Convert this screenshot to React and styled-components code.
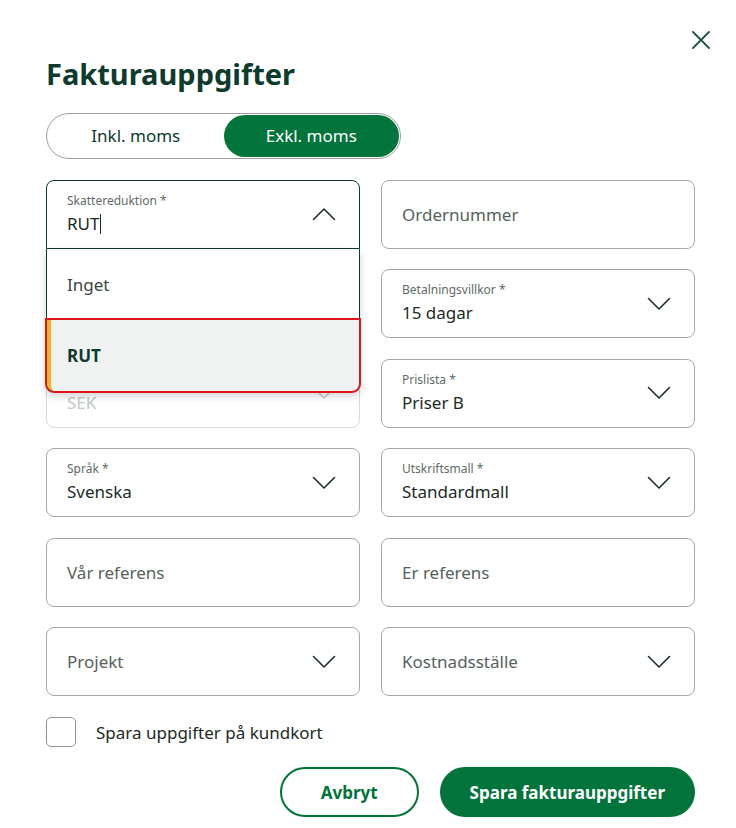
import { useState } from 'react';
import styled, { createGlobalStyle } from 'styled-components';

const GlobalStyle = createGlobalStyle`
  html, body {
    margin: 0;
    padding: 0;
    background: #ffffff;
    font-family: 'Noto Sans', 'Open Sans', sans-serif;
    color: #0f2e24;
  }
`;

const GREEN = '#00743a';
const DARK = '#0d3b2e';

function Chevron({ up, muted }) {
  return (
    <svg width="24" height="14" viewBox="0 0 24 14" fill="none">
      <path
        d={up ? 'M1.5 12.5 L12 2 L22.5 12.5' : 'M1.5 1.5 L12 12 L22.5 1.5'}
        stroke={muted ? '#c9cfcc' : '#1d2f28'}
        strokeWidth="1.6"
        strokeLinecap="round"
        strokeLinejoin="round"
      />
    </svg>
  );
}

function Field({ label, value, placeholder, select, disabled }) {
  return (
    <Box disabled={disabled}>
      <FieldText>
        {label && <Label>{label}</Label>}
        {value ? <Value disabled={disabled}>{value}</Value> : <Placeholder>{placeholder}</Placeholder>}
      </FieldText>
      {select && <Chevron muted={disabled} />}
    </Box>
  );
}

function App() {
  const [vat, setVat] = useState('exkl');
  const [save, setSave] = useState(false);

  return (
    <Page>
      <GlobalStyle />
      <Close aria-label="Stäng">
        <svg width="20" height="20" viewBox="0 0 20 20">
          <path d="M2 2 L18 18 M18 2 L2 18" stroke="#2a5a48" strokeWidth="2" strokeLinecap="round" />
        </svg>
      </Close>
      <Title>Fakturauppgifter</Title>

      <Toggle>
        <ToggleOption active={vat === 'inkl'} onClick={() => setVat('inkl')}>Inkl. moms</ToggleOption>
        <ToggleOption active={vat === 'exkl'} onClick={() => setVat('exkl')}>Exkl. moms</ToggleOption>
      </Toggle>

      <Grid>
        <ComboWrap>
          <Box open>
            <FieldText>
              <Label>Skattereduktion *</Label>
              <Value>RUT<Caret /></Value>
            </FieldText>
            <Chevron up />
          </Box>
          <Menu>
            <MenuItem>Inget</MenuItem>
            <MenuItem selected>RUT</MenuItem>
          </Menu>
        </ComboWrap>
        <Field placeholder="Ordernummer" />

        {/* covered by the open menu */}
        <Box />
        <Field label="Betalningsvillkor *" value="15 dagar" select />

        <Field label="Valuta" value="SEK" select disabled />
        <Field label="Prislista *" value="Priser B" select />

        <Field label="Språk *" value="Svenska" select />
        <Field label="Utskriftsmall *" value="Standardmall" select />

        <Field placeholder="Vår referens" />
        <Field placeholder="Er referens" />

        <Field placeholder="Projekt" select />
        <Field placeholder="Kostnadsställe" select />
      </Grid>

      <CheckRow onClick={() => setSave(!save)}>
        <CheckBox checked={save} />
        <span>Spara uppgifter på kundkort</span>
      </CheckRow>

      <Actions>
        <Button variant="outline">Avbryt</Button>
        <Button>Spara fakturauppgifter</Button>
      </Actions>
    </Page>
  );
}

const Page = styled.div`
  position: relative;
  width: 649px;
  padding: 57px 41px 10px 46px;
`;

const Close = styled.button`
  position: absolute;
  top: 30px;
  right: 25px;
  border: none;
  background: none;
  padding: 0;
  cursor: pointer;
`;

const Title = styled.h1`
  margin: 0 0 21px;
  font-size: 29px;
  font-weight: 700;
  color: ${DARK};
  line-height: 1.2;
`;

const Toggle = styled.div`
  display: grid;
  grid-template-columns: 1fr 1fr;
  width: 355px;
  height: 46px;
  box-sizing: border-box;
  border: 1px solid #9a9f9c;
  border-radius: 23px;
  padding: 1px;
  margin-bottom: 21px;
`;

const ToggleOption = styled.button`
  border: none;
  border-radius: 22px;
  background: ${(p) => (p.active ? GREEN : 'transparent')};
  color: ${(p) => (p.active ? '#ffffff' : DARK)};
  font-family: inherit;
  font-size: 17px;
  cursor: pointer;
`;

const Grid = styled.div`
  display: grid;
  grid-template-columns: 314px 314px;
  column-gap: 21px;
  row-gap: 20.5px;
`;

const Box = styled.div`
  height: 69px;
  box-sizing: border-box;
  display: flex;
  align-items: center;
  justify-content: space-between;
  padding: 0 23px 0 20px;
  border: 1px solid ${(p) => (p.open ? DARK : p.disabled ? '#d6dbd8' : '#a4aaa7')};
  border-radius: ${(p) => (p.open ? '8px 8px 0 0' : '8px')};
  background: #ffffff;
`;

const FieldText = styled.div`
  display: flex;
  flex-direction: column;
`;

const Label = styled.span`
  font-size: 12px;
  color: #5f6b66;
  line-height: 16px;
  margin-bottom: 3px;
`;

const Value = styled.span`
  display: flex;
  align-items: center;
  font-size: 17px;
  line-height: 24px;
  color: ${(p) => (p.disabled ? '#c2c8c5' : '#1c2a24')};
`;

const Caret = styled.span`
  display: inline-block;
  width: 1px;
  height: 20px;
  margin-left: 1px;
  background: #1c2a24;
`;

const Placeholder = styled.span`
  font-size: 17px;
  color: #56625c;
`;

const ComboWrap = styled.div`
  position: relative;
  z-index: 2;
`;

const Menu = styled.div`
  position: absolute;
  top: 69px;
  left: 0;
  right: 0;
  box-sizing: border-box;
  border: 1px solid ${DARK};
  border-top: none;
  border-radius: 0 0 8px 8px;
  background: #ffffff;
  box-shadow: 0 4px 8px rgba(0, 0, 0, 0.18);
`;

const MenuItem = styled.div`
  height: 71px;
  display: flex;
  align-items: center;
  padding-left: 20px;
  font-size: 17px;
  box-sizing: border-box;
  ${(p) =>
    p.selected
      ? `
    font-weight: 700;
    color: ${DARK};
    background: #f0f2f1;
    border-left: 4px solid #f0b429;
    padding-left: 16px;
    border-radius: 0 0 7px 7px;
    outline: 2px solid #e0141e;
    outline-offset: 0;
  `
      : `color: #3b4843;`}
`;

const CheckRow = styled.label`
  display: flex;
  align-items: center;
  gap: 20px;
  margin-top: 21px;
  font-size: 17px;
  color: #1c2a24;
  cursor: pointer;
`;

const CheckBox = styled.span`
  width: 30px;
  height: 30px;
  box-sizing: border-box;
  border: 1px solid #8f9592;
  border-radius: 5px;
  background: ${(p) => (p.checked ? GREEN : '#fff')};
`;

const Actions = styled.div`
  display: flex;
  justify-content: flex-end;
  gap: 21px;
  margin-top: 20px;
`;

const Button = styled.button`
  height: 50px;
  padding: 0 ${(p) => (p.variant === 'outline' ? '39px' : '28px')};
  border-radius: 25px;
  border: 2px solid ${GREEN};
  background: ${(p) => (p.variant === 'outline' ? '#fff' : GREEN)};
  color: ${(p) => (p.variant === 'outline' ? GREEN : '#fff')};
  font-family: inherit;
  font-size: 17px;
  font-weight: 700;
  cursor: pointer;
`;

export default App;
